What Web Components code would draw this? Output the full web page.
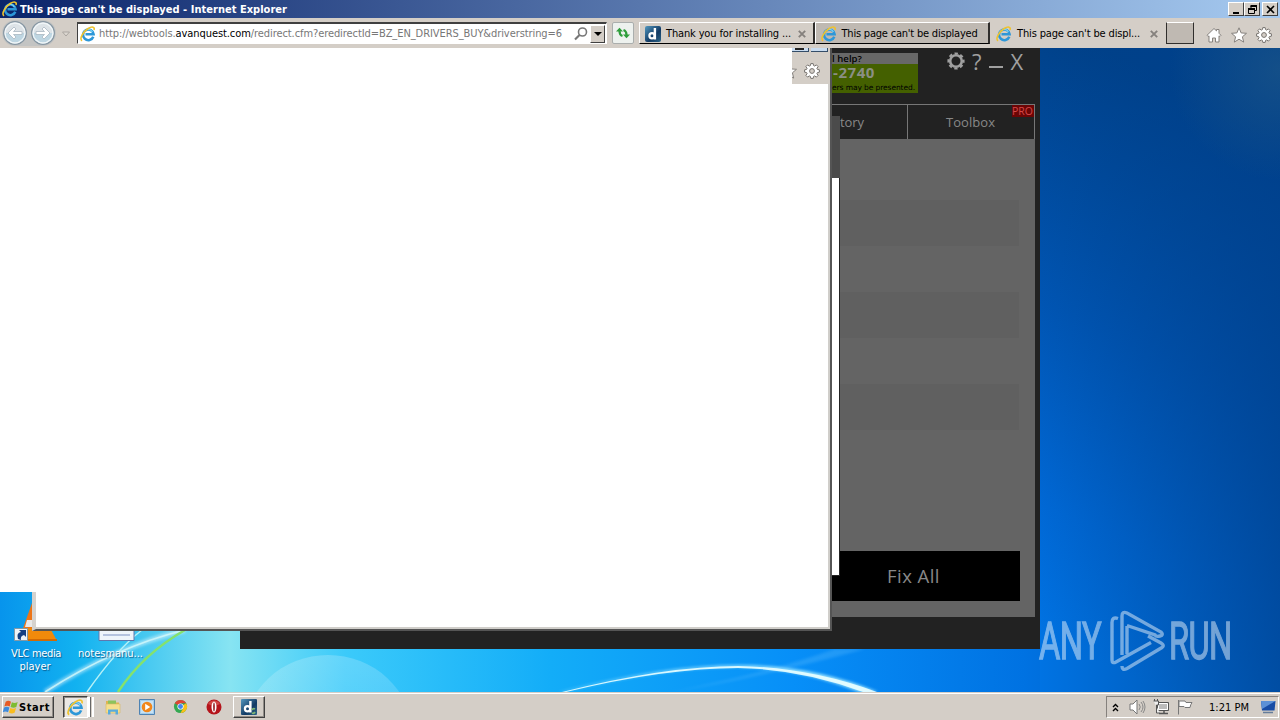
<!DOCTYPE html>
<html lang="en">
<head>
<meta charset="utf-8">
<title>Desktop</title>
<style>
	html, body {
		margin: 0;
		width: 1280px;
		height: 720px;
		overflow: hidden;
	}
	body {
		font: 11px/14px "DejaVu Sans Condensed", "DejaVu Sans", sans-serif;
		font-stretch: condensed;
	}
</style>
</head>
<body>
<desk-top></desk-top>

<script>
const icons = {
	ie: `<svg viewBox="0 0 16 16"><path d="M13.300 10.700A5.300 5.300 0 1 1 13.600 8.200H5.500" fill="none" stroke="#2d97d8" stroke-width="2.500"/><path d="M3.800 7a4.600 4.600 0 0 1 8.600-1" fill="none" stroke="#7ed6f7" stroke-width="1.200"/><path d="M2 14.800C-1.100 12.600 3.700 5.300 8.200 2.500c3.800-2.400 7-1.700 5.800 1.600" fill="none" stroke="#efc32e" stroke-width="1.600"/></svg>`,
	d: `<svg viewBox="0 0 16 16"><defs><linearGradient id="g" x2="1" y2="1"><stop stop-color="#5398bf"/><stop offset=".6" stop-color="#123a64"/><stop offset="1" stop-color="#2e6688"/></linearGradient></defs><rect width="16" height="16" rx="2" fill="url(#g)"/><circle cx="7" cy="9.800" r="2.600" fill="none" stroke="#fff" stroke-width="2.200"/><path d="M9.900 2v11.500" stroke="#fff" stroke-width="2.400"/></svg>`,
	app: `<svg viewBox="0 0 16 16"><defs><linearGradient id="g" x2="1" y2="1"><stop stop-color="#5398bf"/><stop offset=".6" stop-color="#123a64"/><stop offset="1" stop-color="#2e6688"/></linearGradient></defs><rect width="16" height="16" rx="1" fill="url(#g)"/><circle cx="6.500" cy="9.800" r="2.600" fill="none" stroke="#fff" stroke-width="2.200"/><path d="M9.400 2v11.500" stroke="#fff" stroke-width="2.400"/><path d="M11 11q1-2 3-1M14 13q-1 2-3 1" fill="none" stroke="#7fb776" stroke-width="1.700"/></svg>`,
	back: `<svg viewBox="0 0 26 26"><circle cx="13" cy="13" r="11.300" fill="#dde3e7" stroke="#8797a3" stroke-width="1.300"/><path d="M2.500 13a10.500 10.500 0 0 0 21 0z" fill="#bed6e2"/><circle cx="13" cy="13" r="9.900" fill="none" stroke="#f1f6f8" stroke-width="1.200"/><path d="M6 13l6-6 2 2-2.500 2.500H20v3h-8.500L14 17l-2 2z" fill="#fff" stroke="#a9b8c1" stroke-width=".8"/></svg>`,
	search: `<svg viewBox="0 0 14 14"><circle cx="8.500" cy="5" r="4" fill="none" stroke="#777" stroke-width="1.600"/><path d="M5.500 8L1 12.500" stroke="#777" stroke-width="2.200"/></svg>`,
	down: `<svg viewBox="0 0 8 8"><path d="M0 2h8L4 6z"/></svg>`,
	hollow: `<svg viewBox="0 0 8 8"><path d="M.5 2h7L4 6z" fill="#ddd8d2" stroke="#aaa5a0"/></svg>`,
	refresh: `<svg viewBox="0 0 16 16"><path d="M1 6.500L4.500 2.800 8 6.500z" fill="#2e9d3a"/><path d="M4.500 6q0 4 3 5" fill="none" stroke="#2e9d3a" stroke-width="2.200"/><path d="M15 9.500L11.500 13.200 8 9.500z" fill="#2e9d3a"/><path d="M11.500 10q0-4-3-5" fill="none" stroke="#2e9d3a" stroke-width="2.200"/></svg>`,
	close: `<svg viewBox="0 0 8 8"><path d="M.8 .8l6.400 6.400M7.200 .8L.8 7.200" stroke="#85817d" stroke-width="1.900"/></svg>`,
	home: `<svg viewBox="0 0 16 16"><path d="M1 8.300L8 1.500l2.500 2.400V2.500h2.500v3.800l2 2-1.200 1.200-.8-.7V15H9.500v-4h-3v4H3V8.800l-.8.700z" fill="#fff" stroke="#85817d"/></svg>`,
	star: `<svg viewBox="0 0 16 16"><path d="M8 .8l2.100 5.100 5.400.4-4.100 3.500 1.300 5.300L8 12.200l-4.700 2.900 1.300-5.300L.5 6.300l5.400-.4z" fill="#fff" stroke="#85817d"/></svg>`,
	gear: `<svg viewBox="0 0 16 16"><path d="M6.800 .6h2.400l.4 2 1.100.5 1.700-1.200 1.700 1.700-1.200 1.700.5 1.100 2 .4v2.400l-2 .4-.5 1.100 1.200 1.700-1.700 1.700-1.700-1.200-1.100.5-.4 2H6.800l-.4-2-1.100-.5-1.700 1.200-1.700-1.700 1.200-1.700-.5-1.100-2-.4V6.800l2-.4.5-1.100-1.200-1.700 1.700-1.700 1.700 1.200L6.400 2.600z" fill="#fff" stroke="#77736f"/><circle cx="8" cy="8" r="2.400" fill="#d4cec7" stroke="#77736f"/></svg>`,
	cog: `<svg viewBox="0 0 18 18"><circle cx="9" cy="9" r="5.800" fill="none" stroke="#a0a0a0" stroke-width="2.600"/><circle cx="9" cy="9" r="7.600" fill="none" stroke="#a0a0a0" stroke-width="2" stroke-dasharray="3.400 2.570" stroke-dashoffset="1.700"/></svg>`,
	min: `<svg viewBox="0 0 9 9"><path d="M1 8h6" stroke="#000" stroke-width="2"/></svg>`,
	restore: `<svg viewBox="0 0 9 9"><path d="M3 3V1h5.500v4.500h-2M.5 3.500h6v5h-6z" fill="none" stroke="#000"/><path d="M2.500 1h6.500M0 4h7" stroke="#000" stroke-width="2"/></svg>`,
	x: `<svg viewBox="0 0 9 9"><path d="M1 1l7 7M8 1L1 8" stroke="#000" stroke-width="1.600"/></svg>`,
	win: `<svg viewBox="0 0 18 18"><path d="M3 3c2-1.400 4-1.300 6 0L7.500 8.400C5.500 7.200 3.600 7.300 1.500 8.500z" fill="#e75b25"/><path d="M10 3.600c2 1.200 4 1.100 6.500-.1L15 9c-2.400 1.200-4.400 1-6.500-.1z" fill="#7ebc31"/><path d="M1.200 9.500c2.100-1.200 4-1.200 6 0L5.700 15c-2-1.200-4-1.200-6 0z" fill="#3e8bdc"/><path d="M8.200 10c2 1.200 4 1.200 6.500.1L13 15.500c-2.300 1.100-4.200 1-6.300-.2z" fill="#f9bd20"/></svg>`,
	folder: `<svg viewBox="0 0 16 16"><path d="M1 2h5l1 1.500h7V14H1z" fill="#e0b44f"/><path d="M3 1.500h8v4H3z" fill="#8cc35c"/><path d="M1 5h14v9H1z" fill="#f5df8d" stroke="#d6ba62" stroke-width=".6"/><path d="M3 15.500v-5h10v5h-2.500v-2.700h-5v2.700z" fill="#58abdb"/></svg>`,
	media: `<svg viewBox="0 0 16 16"><path d="M.5.500h15v15H.5z" fill="#a2cdec" stroke="#4e83b3"/><path d="M2 2h12v12H2z" fill="#c6e2f5"/><circle cx="8" cy="8" r="5.300" fill="#f1871b"/><path d="M6.200 4.800L11.200 8l-5 3.200z" fill="#fff"/></svg>`,
	chrome: `<svg viewBox="0 0 16 16"><circle cx="8" cy="8" r="7" fill="#35a852"/><path d="M8 8L1.900 4.500A7 7 0 0 1 14.100 4.500H8z" fill="#df4334"/><path d="M8 8l6.100-3.500A7 7 0 0 1 8 15l3-5.500z" fill="#fbc116"/><circle cx="8" cy="8" r="3.300" fill="#fff"/><circle cx="8" cy="8" r="2.600" fill="#4387ed"/></svg>`,
	opera: `<svg viewBox="0 0 16 16"><circle cx="8" cy="8" r="7.500" fill="#b5141b"/><path d="M2 5a7 7 0 0 1 12 0C10 7 6 7 2 5z" fill="#d04745"/><ellipse cx="8" cy="8" rx="2.500" ry="5.500" fill="#fff"/><ellipse cx="8" cy="8" rx=".8" ry="4.600" fill="#8d1015"/></svg>`,
	chevrons: `<svg viewBox="0 0 7 9"><path d="M1 4l2.500-2.500L6 4M1 8l2.500-2.500L6 8" fill="none" stroke="#000" stroke-width="1.400"/></svg>`,
	sound: `<svg viewBox="0 0 16 16"><path d="M1 5h3l4-4v14l-4-4H1z" fill="#fff" stroke="#777"/><path d="M10 5q2.500 3 0 6M12 3q4 5 0 10M14 2q4 6 0 12" fill="none" stroke="#888"/></svg>`,
	net: `<svg viewBox="0 0 16 16"><path d="M4.500 3.500h11v8h-11z" fill="#bbb" stroke="#555"/><path d="M5.500 4.500h9v6h-9z" fill="none" stroke="#fff"/><path d="M6 14.500h9M11 12v2" stroke="#555" stroke-width="1.500"/><path d="M.5 2h5v4h-2v8H7" fill="#eee" stroke="#555"/><path d="M1.500 0v2M4.500 0v2" stroke="#555"/></svg>`,
	flag: `<svg viewBox="0 0 16 16"><path d="M1.500 1v14.500M2 2h6l1 1.500h6q-1.500 2-2 5H8L7 7.500H2z" fill="#fff" stroke="#777"/></svg>`,
	monitor: `<svg viewBox="0 0 16 14"><path d="M1 1h14.500l-1 9.500H2z" fill="#174ca5"/><path d="M1 1h14.500L2 9z" fill="#5c91d7"/><path d="M3 12.500h10" stroke="#667d9a" stroke-width="1.500"/></svg>`
};

class UiIcon extends HTMLElement {
	constructor() {
		super();
		this.attachShadow({ mode: "open" });
	}

	connectedCallback() {
		const size = this.getAttribute("size") || "16";
		this.shadowRoot.innerHTML = `
			<style>
				:host { display: block; flex: none; width: ${size}px; height: ${size}px; }
				svg { display: block; width: 100%; height: 100%; overflow: visible; }
			</style>
			${icons[this.getAttribute("name")] || ""}
		`;
	}
}
customElements.define("ui-icon", UiIcon);

// one-line label whose letter spacing is adjusted to a given width
class FitLabel extends HTMLElement {
	constructor() {
		super();
		this.attachShadow({ mode: "open" });
		this.shadowRoot.innerHTML = `
			<style>
				:host { display: block; flex: none; white-space: nowrap; }
				span { display: inline-block; }
			</style>
			<span><slot></slot></span>
		`;
	}

	connectedCallback() {
		this.fit();
	}

	fit() {
		const width = Number(this.getAttribute("width"));
		const span = this.shadowRoot.querySelector("span");
		if (!this.textContent) return;
		span.style.letterSpacing = "0";
		const gap = (width - span.getBoundingClientRect().width) / this.textContent.length;
		span.style.letterSpacing = `${gap}px`;
		this.style.width = `${width}px`;
	}
}
customElements.define("fit-label", FitLabel);

class TitleBar extends HTMLElement {
	constructor() {
		super();
		this.attachShadow({ mode: "open" });
		this.shadowRoot.innerHTML = `
			<style>
				:host {
					display: flex; align-items: center; box-sizing: border-box; height: 18px; padding: 0 2px 0 2px;
					background: linear-gradient(90deg, #0a246a, #a6caf0);
					color: #fff; font-weight: bold;
				}
				fit-label { margin: 1px 0 0 2px; }
				.buttons { display: flex; margin-left: auto; }
				.buttons div {
					display: grid; place-items: center; box-sizing: border-box; width: 16px; height: 14px;
					background: #d4cec7; border: 1px solid; border-color: #fff #404040 #404040 #fff;
				}
				.buttons div:last-child { margin-left: 2px; }
			</style>
			<ui-icon name="ie" size="16"></ui-icon>
			<fit-label width="267"></fit-label>
			<div class="buttons">
				<div><ui-icon name="min" size="9"></ui-icon></div>
				<div><ui-icon name="restore" size="9"></ui-icon></div>
				<div><ui-icon name="x" size="9"></ui-icon></div>
			</div>
		`;
	}

	connectedCallback() {
		const label = this.shadowRoot.querySelector("fit-label");
		label.textContent = this.getAttribute("label");
		label.fit();
	}
}
customElements.define("title-bar", TitleBar);

class BrowserTab extends HTMLElement {
	constructor() {
		super();
		this.attachShadow({ mode: "open" });
	}

	connectedCallback() {
		const closable = this.hasAttribute("closable");
		this.shadowRoot.innerHTML = `
			<style>
				:host {
					display: flex; align-items: center; box-sizing: border-box; width: 175.500px; height: 22px;
					padding: 0 7px 0 5px; background: #d4cec7;
					border: solid; border-width: 1px 2px 1px 1px; border-color: #fff #302e2c #000 #fff;
				}
				:host([dim]) { background: #bfb9b2; }
				:host([active]) { border-color: transparent; padding-right: 6px; }
				ui-icon { margin-top: 1px; }
				fit-label { margin: 1px 0 0 5px; }
				.close { margin-left: auto; }
			</style>
			<ui-icon name="${this.getAttribute("icon")}" size="16"></ui-icon>
			<fit-label width="${this.getAttribute("text-width")}">${this.getAttribute("label")}</fit-label>
			${closable ? '<ui-icon class="close" name="close" size="8"></ui-icon>' : ""}
		`;
	}
}
customElements.define("browser-tab", BrowserTab);

class NavBar extends HTMLElement {
	constructor() {
		super();
		this.attachShadow({ mode: "open" });
		this.shadowRoot.innerHTML = `
			<style>
				:host {
					display: flex; align-items: center; box-sizing: border-box; height: 30px; padding-left: 2px;
					background: #d4cec7; color: #000;
				}
				.pair { display: flex; gap: 2px; background: #c3c4c3; border-radius: 13px; }
				.forward { transform: scaleX(-1); }
				.drop { margin: 2px 7px 0 6px; }
				.address {
					display: flex; align-items: center; box-sizing: border-box; width: 530px; height: 22px; padding: 0 1px 0 2px;
					background: #fff; color: #777; border: 1px solid; border-color: #404040 #fff #fff #404040; border-top-width: 2px;
				}
				.address fit-label { margin-left: 3px; }
				b { font-weight: normal; color: #000; }
				.search { margin-left: 12px; }
				.arrow {
					display: grid; place-items: center; box-sizing: border-box; width: 15px; height: 18px; margin-left: auto;
					background: #d4cec7; border: 1px solid; border-color: #fff #404040 #404040 #fff;
				}
				.refresh {
					display: grid; place-items: center; box-sizing: border-box; width: 22px; height: 22px; margin: 0 5px;
					background: #edf1ee; border: 1px solid #aaaead; border-radius: 2px;
				}
				.new {
					box-sizing: border-box; width: 28px; height: 22px; background: #bfb9b2;
					border: solid #302e2c; border-width: 1px 1px 1px 1px; border-top-color: #fff;
				}
				.tools { display: flex; gap: 9px; margin: 3px 0 0 12.500px; }
			</style>
			<div class="pair">
				<ui-icon name="back" size="26"></ui-icon>
				<ui-icon class="forward" name="back" size="26"></ui-icon>
			</div>
			<ui-icon class="drop" name="hollow" size="8"></ui-icon>
			<div class="address">
				<ui-icon name="ie" size="16"></ui-icon>
				<fit-label width="463">http://webtools.<b>avanquest.com</b>/redirect.cfm?eredirectId=BZ_EN_DRIVERS_BUY&amp;driverstring=6</fit-label>
				<ui-icon class="search" name="search" size="14"></ui-icon>
				<div class="arrow"><ui-icon name="down" size="8"></ui-icon></div>
			</div>
			<div class="refresh"><ui-icon name="refresh" size="16"></ui-icon></div>
			<browser-tab icon="d" label="Thank you for installing ..." text-width="125" closable></browser-tab>
			<browser-tab icon="ie" label="This page can't be displayed" text-width="136" dim></browser-tab>
			<browser-tab icon="ie" label="This page can't be displ..." text-width="123" closable active></browser-tab>
			<div class="new"></div>
			<div class="tools">
				<ui-icon name="home" size="16"></ui-icon>
				<ui-icon name="star" size="16"></ui-icon>
				<ui-icon name="gear" size="16"></ui-icon>
			</div>
		`;
	}
}
customElements.define("nav-bar", NavBar);

class WallPaper extends HTMLElement {
	constructor() {
		super();
		this.attachShadow({ mode: "open" });
		this.shadowRoot.innerHTML = `
			<style>
				:host { display: block; width: 1280px; height: 644px; }
				svg { display: block; }
			</style>
			<svg width="1280" height="644" viewBox="0 48 1280 644">
				<defs>
					<linearGradient id="base"><stop stop-color="#0794ec"/><stop offset=".06" stop-color="#12b2f0"/><stop offset=".18" stop-color="#87e4f2"/><stop offset=".27" stop-color="#3bcafa"/><stop offset=".43" stop-color="#13adf8"/><stop offset=".62" stop-color="#078ff8"/><stop offset=".8" stop-color="#0072e2"/><stop offset="1" stop-color="#004ba5"/></linearGradient>
					<linearGradient id="right" gradientUnits="userSpaceOnUse" x1="1200" y1="90" x2="990" y2="620"><stop stop-color="#004189"/><stop offset=".45" stop-color="#0055b3"/><stop offset=".78" stop-color="#0068d5"/><stop offset="1" stop-color="#0073e3"/></linearGradient>
					<linearGradient id="edge" gradientUnits="userSpaceOnUse" x1="1040" y1="0" x2="1280" y2="0"><stop stop-color="#00408c" stop-opacity="0"/><stop offset="1" stop-color="#00408c" stop-opacity=".72"/></linearGradient>
					<radialGradient id="corner" gradientUnits="userSpaceOnUse" cx="1280" cy="70" r="110"><stop stop-color="#1c5587" stop-opacity=".7"/><stop offset="1" stop-color="#1c5587" stop-opacity="0"/></radialGradient>
					<linearGradient id="orb" x2="0" y2="1"><stop stop-color="#fff" stop-opacity=".2"/><stop offset=".6" stop-color="#fff" stop-opacity=".08"/></linearGradient>
					<filter id="soft"><feGaussianBlur stdDeviation="1.500"/></filter>
				</defs>
				<path d="M0 48h1280v644H0z" fill="url(#base)"/>
				<path d="M1040 48h240v644h-240z" fill="url(#right)"/>
				<path d="M1040 48h240v644h-240z" fill="url(#edge)"/>
				<path d="M1150 48h130v150h-130z" fill="url(#corner)"/>
				<ellipse cx="328" cy="734" rx="84" ry="79" fill="url(#orb)"/>
				<path d="M670 692q80-12 195-43h-30q-70 25-165 43z" fill="#75c9ff" opacity=".25" filter="url(#soft)"/>
				<g fill="none">
					<path d="M45 692q70-45 140-62" stroke="#fff" stroke-width="5" opacity=".45" filter="url(#soft)"/>
					<path d="M45 692q70-45 140-62" stroke="#d3f9fa" stroke-width="1.800" opacity=".8"/>
					<path d="M87 692q30-43 55-62" stroke="#b5f1f7" stroke-width="1.500"/>
					<path d="M118 692q25-38 67-62" stroke="#85e26c" stroke-width="2.500"/>
				</g>
				<path d="M560 692q106-27 178-27 75 0 140 27h-19q-59-24-122-25-72 0-175 25z" fill="#9be4ff" filter="url(#soft)"/>
				<path d="M562 692q104-26 176-26 71 1 139 26h-14q-62-23-125-24-73 0-172 24z" fill="#eaffff" opacity=".9"/>
			</svg>
		`;
	}
}
customElements.define("wall-paper", WallPaper);

class DriverWindow extends HTMLElement {
	constructor() {
		super();
		this.attachShadow({ mode: "open" });
	}

	connectedCallback() {
		this.shadowRoot.innerHTML = `
			<style>
				:host {
					display: grid; grid-template-rows: 56px 35px 478px; box-sizing: border-box; width: 800px; height: 601px;
					padding-right: 5px; background: #222;
					font-family: "Open Sans", "Noto Sans", sans-serif; font-stretch: normal; color: #888;
				}
				.top { display: flex; }
				.promo { width: 86px; height: 40px; margin: 5px 0 0 592px; background: #446000; color: #000; }
				.promo .help { height: 11px; background: #686868; font: 600 9.500px/11px "Open Sans", sans-serif; }
				.promo .phone { height: 17px; padding-left: 1px; color: #8b8f84; font-weight: bold; font-size: 15px; line-height: 17px; }
				.promo .note { font: 7.500px/13px "DejaVu Sans"; }
				.buttons { display: flex; margin-left: 29px; color: #a0a0a0; font-size: 22px; line-height: 26px; }
				.buttons ui-icon { margin-top: 4px; }
				.buttons .ask { margin-left: 7px; }
				.buttons .min { width: 14px; height: 2px; margin: 18px 8px 0 7px; background: #a0a0a0; }
				.tabs { display: grid; grid-template-columns: 668px 1fr; box-sizing: border-box; border: 1px solid #777; border-width: 1px 1px 0 0; font-size: 13px; line-height: 35px; }
				.history { box-sizing: border-box; border-right: 1px solid #777; padding-left: 600px; }
				.toolbox { position: relative; padding-left: 38px; }
				.pro { position: absolute; top: 0; right: 0; width: 22px; height: 12px; background: #6b0505; color: #d44848; font-size: 10.500px; line-height: 13px; }
				.panel { display: flex; flex-direction: column; box-sizing: border-box; padding: 61px 15px 16px 0; background: #646464; }
				.row { flex: none; height: 46px; margin: 0 1px 46px 0; background: #606060; }
				.fix { flex: none; box-sizing: border-box; height: 50px; margin-top: auto; padding-left: 647px; background: #000; font-size: 18.500px; line-height: 50px; }
			</style>
			<div class="top">
				<div class="promo">
					<div class="help"><fit-label width="30">l help?</fit-label></div>
					<div class="phone"><fit-label width="42">-2740</fit-label></div>
					<fit-label class="note" width="83">ers may be presented.</fit-label>
				</div>
				<div class="buttons"><ui-icon name="cog" size="18"></ui-icon><div class="ask">?</div><div class="min"></div><div>X</div></div>
			</div>
			<div class="tabs">
				<div class="history"><fit-label width="24">tory</fit-label></div>
				<div class="toolbox"><fit-label width="49">Toolbox</fit-label><div class="pro">PRO</div></div>
			</div>
			<div class="panel"><div class="row"></div><div class="row"></div><div class="row"></div><div class="fix"><fit-label width="53">Fix All</fit-label></div></div>
		`;
	}
}
customElements.define("driver-window", DriverWindow);

class BlankWindow extends HTMLElement {
	constructor() {
		super();
		this.attachShadow({ mode: "open" });
		this.shadowRoot.innerHTML = `
			<style>
				:host { display: flex; flex-direction: column; width: 832px; height: 583px; }
				.page { flex: none; display: flex; justify-content: flex-end; box-sizing: border-box; width: 832px; height: 544px; background: #fff; border: solid #555; border-width: 0 2px 0 0; box-shadow: inset -2px 0 #d0ceca; }
				.foot { flex: 1; box-sizing: border-box; margin-left: 32px; background: #fff; border: solid #555; border-width: 0 2px 2px 4px; border-left-color: #d5d2ce; box-shadow: inset -2px -2px #d0ceca; }
				.scrap { display: flex; justify-content: flex-end; box-sizing: border-box; width: 38px; height: 36px; padding: 15px 10px 0 0; background: #d4cec7; overflow: hidden; }
				.scrap ui-icon:first-child { margin-right: 7px; }
				.caps { position: absolute; left: 792px; top: 0; display: flex; gap: 2px; width: 36px; height: 4px; }
				.caps div { flex: 1; box-sizing: border-box; border: solid #344d68; border-width: 0 1px 1px 0; background: #c9dcf0; }
				.caps i { display: block; width: 9px; height: 2px; margin-left: 3px; background: #222; }
			</style>
			<div class="page"><div class="scrap"><ui-icon name="star" size="16"></ui-icon><ui-icon name="gear" size="16"></ui-icon></div></div>
			<div class="foot"></div>
			<div class="caps"><div><i></i></div><div></div></div>
		`;
	}
}
customElements.define("blank-window", BlankWindow);

class AnyRunMark extends HTMLElement {
	constructor() {
		super();
		this.attachShadow({ mode: "open" });
		this.shadowRoot.innerHTML = `
			<style>
				:host { display: block; width: 204px; height: 72px; opacity: .5; }
				svg { display: block; overflow: visible; }
				text { font: 400 51px Roboto, sans-serif; fill: #e8f1fa; stroke: #e8f1fa; stroke-width: 1.300px; }
			</style>
			<svg width="204" height="72" viewBox="0 0 204 72">
				<text transform="translate(1 50) scale(.64 1)" textLength="98" lengthAdjust="spacing">ANY</text>
				<text transform="translate(131 50) scale(.64 1)" textLength="99" lengthAdjust="spacing">RUN</text>
				<path d="M80 9.500q-6-2-6 4V51q0 4 4 2l35-19.500M84 46V7q0-5 5-3l34 19q3 3-1 4t-5-1L89 16.500M84 57q0 5 5 2.500l35-21q3-2-1-4.500l-13-7M89 17v28" fill="none" stroke="#e8f1fa" stroke-width="3.400"/>
			</svg>
		`;
	}
}
customElements.define("any-run-mark", AnyRunMark);

class TaskBar extends HTMLElement {
	constructor() {
		super();
		this.attachShadow({ mode: "open" });
		this.shadowRoot.innerHTML = `
			<style>
				:host { display: flex; align-items: center; box-sizing: border-box; height: 28px; padding: 1px 1px 0 2px; background: #d4cec7; border-top: 1px solid #d4cec7; box-shadow: inset 0 1px #fff; color: #000; }
				.button { display: flex; align-items: center; box-sizing: border-box; height: 22px; border: 1px solid; border-color: #fff #404040 #404040 #fff; box-shadow: inset -1px -1px #918d88; }
				.start { width: 52px; font-weight: bold; }
				.pressed { width: 25px; margin-left: 9px; padding-left: 3px; background: #eae7e3; border-color: #404040 #fff #fff #404040; box-shadow: inset 1px 1px #918d88; }
				.stack { box-sizing: border-box; width: 6px; height: 20px; border: solid #fff; border-width: 0 2px; box-shadow: inset 1px 0 #666; }
				.quick { display: flex; gap: 18px; margin: 0 11px 0 11px; }
				.app { width: 32px; padding-left: 7px; }
				.tray { display: flex; align-items: center; box-sizing: border-box; width: 173px; height: 22px; margin-left: auto; padding: 0 2px 0 4px; border: 1px solid; border-color: #85817d #fff #fff #85817d; }
				.tray .sound { margin: 0 8px 0 9px; }
				.tray .flag { margin: 0 16px 0 8px; }
				.tray .monitor { margin-left: auto; }
				fit-label { margin-top: 2px; }
			</style>
			<div class="button start"><ui-icon name="win" size="16"></ui-icon><fit-label width="31">Start</fit-label></div>
			<div class="button pressed"><ui-icon name="ie" size="17"></ui-icon></div><div class="stack"></div>
			<div class="quick">
				<ui-icon name="folder" size="16"></ui-icon>
				<ui-icon name="media" size="16"></ui-icon>
				<ui-icon name="chrome" size="15"></ui-icon>
				<ui-icon name="opera" size="16"></ui-icon>
			</div>
			<div class="button app"><ui-icon name="app" size="16"></ui-icon></div>
			<div class="tray">
				<ui-icon name="chevrons" size="9"></ui-icon>
				<ui-icon class="sound" name="sound" size="16"></ui-icon>
				<ui-icon name="net" size="16"></ui-icon>
				<ui-icon class="flag" name="flag" size="16"></ui-icon>
				<fit-label width="40">1:21 PM</fit-label>
				<ui-icon class="monitor" name="monitor" size="16"></ui-icon>
			</div>
		`;
	}
}
customElements.define("task-bar", TaskBar);

class DeskTop extends HTMLElement {
	constructor() {
		super();
		this.attachShadow({ mode: "open" });
	}

	connectedCallback() {
		this.shadowRoot.innerHTML = `
			<style>
				:host { display: grid; grid-template-rows: 18px 30px 644px 28px; width: 1280px; height: 720px; }
				.space { position: relative; overflow: hidden; }
				.space > :not(wall-paper) { position: absolute; }
				driver-window { left: 240px; top: 0; }
				blank-window { left: 0; top: 0; }
				.scroll { left: 832px; top: 68px; box-sizing: border-box; width: 8px; height: 460px; background: #fff; border: solid #222; border-width: 0 1px 1px 0; }
				.scroll div { width: 8px; height: 62px; background: #4b4b4b; }
				.vlc { left: 12px; top: 555px; }
				.note { left: 98px; top: 577px; }
				.caption { color: #fff; text-align: center; line-height: 13px; text-shadow: 1px 1px 1px #0a5c8d; }
				.player { left: 11px; top: 599px; }
				.player span { display: block; margin-right: 2px; }
				.notes { left: 78px; top: 599px; }
				any-run-mark { left: 1038px; top: 561px; }
			</style>
			<title-bar label="This page can't be displayed - Internet Explorer"></title-bar>
			<nav-bar></nav-bar>
			<div class="space">
				<wall-paper></wall-paper>
				<driver-window></driver-window>
				<svg class="vlc" width="46" height="40"><path d="M20 0l10 28H10z" fill="#ed7517"/><path d="M15 17h10l2 7H13z" fill="#e8e8e8"/><path d="M12 25h26l6 11H8z" fill="#f18a0b"/><path d="M9 36h36v2H9z" fill="#d16a04"/><path d="M2.500 25.500h13v12h-13z" fill="#edf3f8" stroke="#8399a7"/><path d="M6 36q-2-6 3-7l-2-2h7v7l-2-2q-4 1-3 5z" fill="#143f83"/></svg>
				<svg class="note" width="38" height="18"><path d="M1 0h35v15.500H1z" fill="#eef4fb" stroke="#6077ad"/><path d="M5 10h27" stroke="#7c91c3"/></svg>
				<div class="caption player"><fit-label width="50">VLC media</fit-label><span>player</span></div>
				<div class="caption notes"><fit-label width="65">notesmanu...</fit-label></div>
				<div class="scroll"><div></div></div>
				<blank-window></blank-window>
				<any-run-mark></any-run-mark>
			</div>
			<task-bar></task-bar>
		`;
	}
}
customElements.define("desk-top", DeskTop);
</script>
</body>
</html>
